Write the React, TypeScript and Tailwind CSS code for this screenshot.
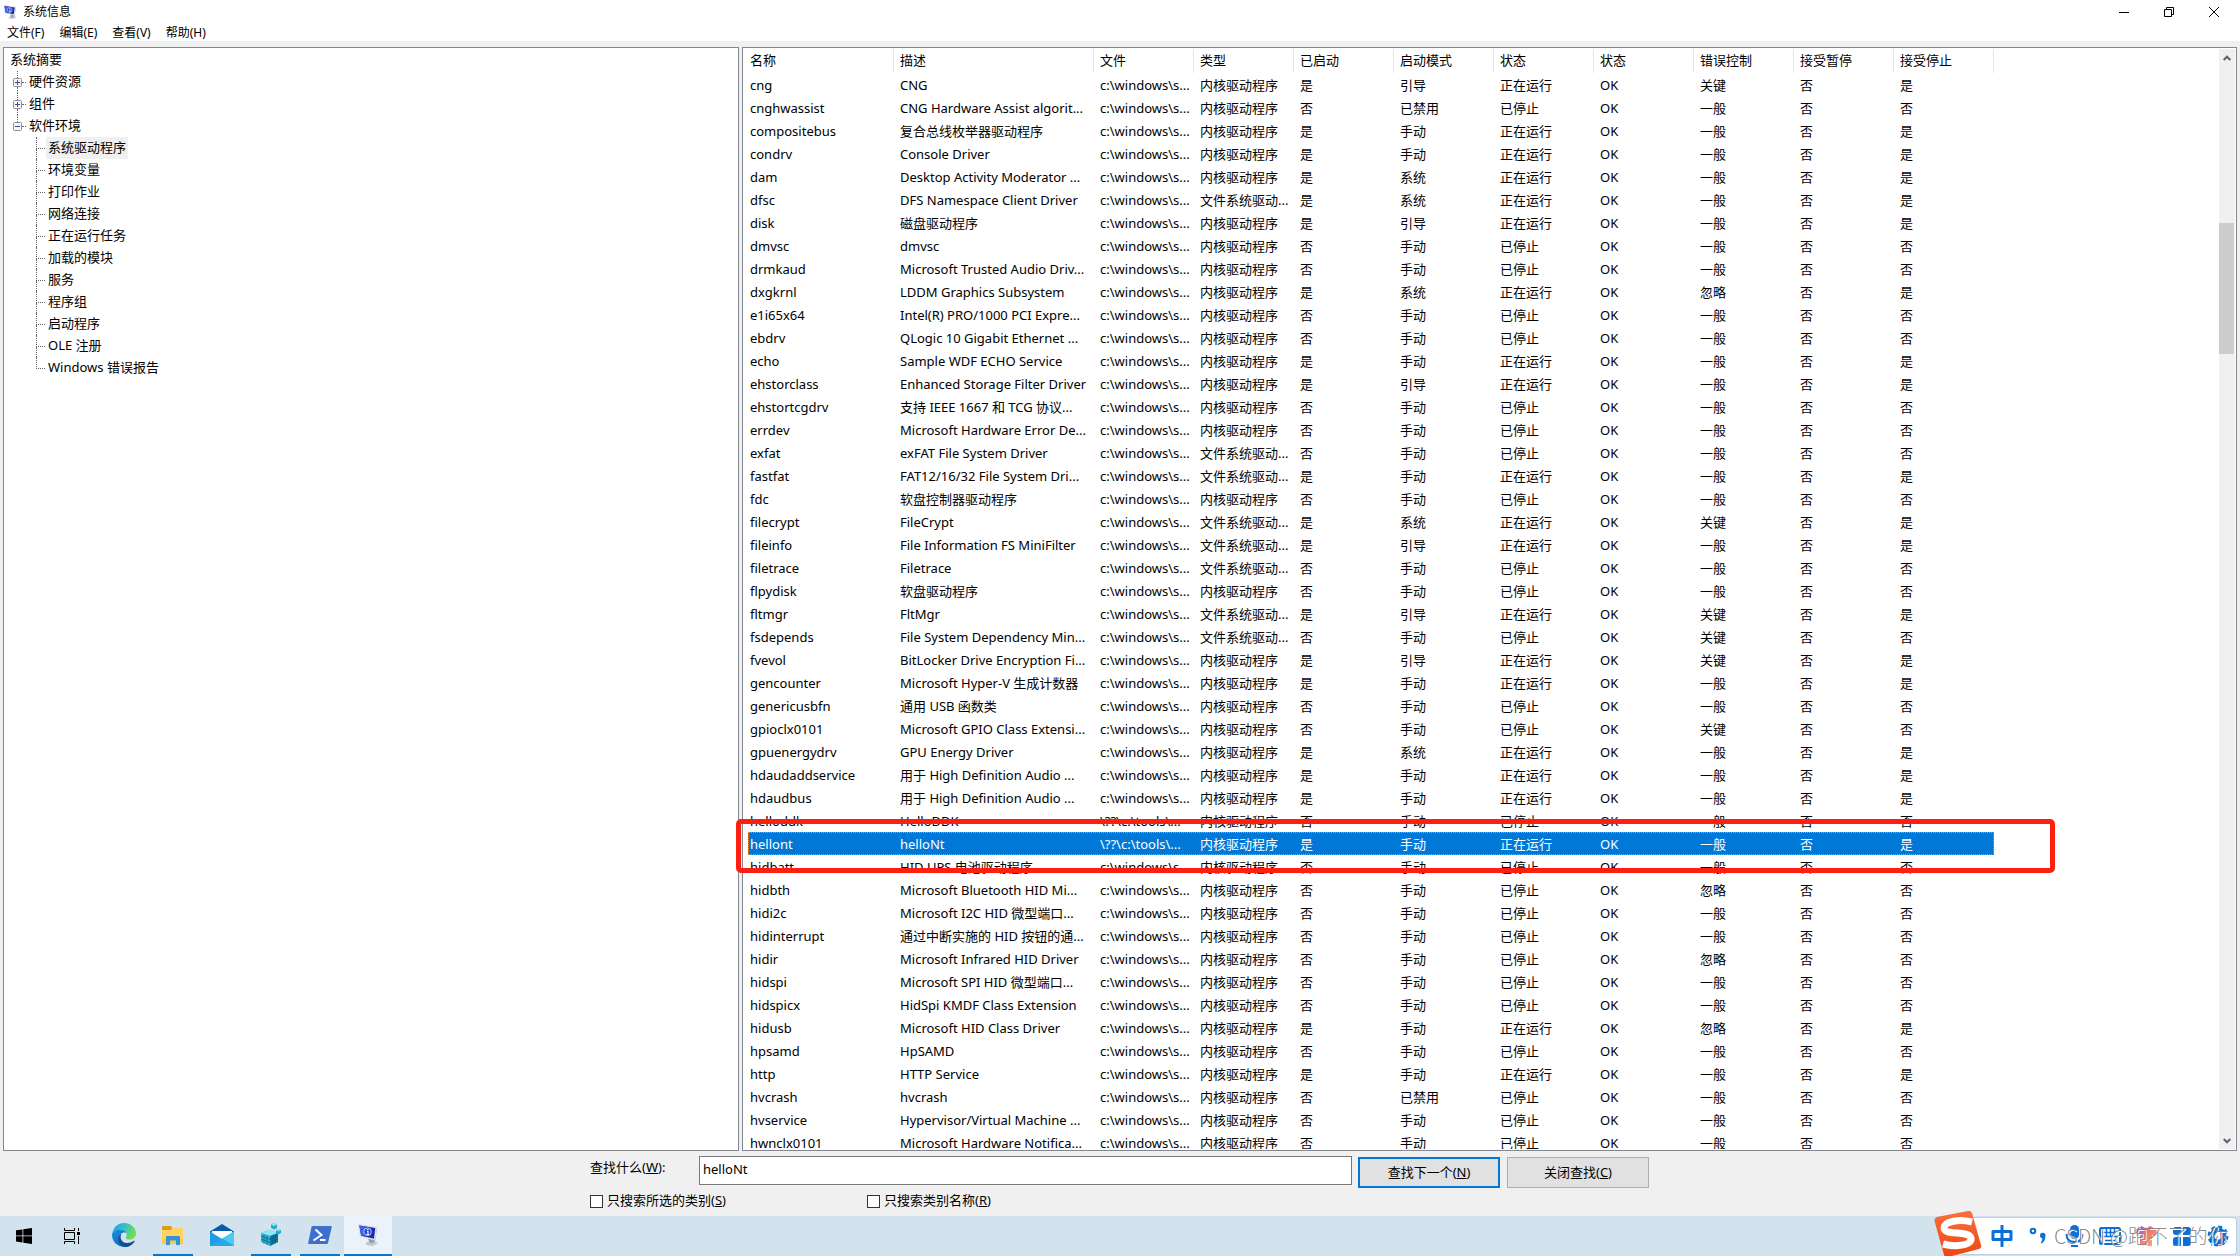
import React, { useState } from 'react';

const columns = ['名称', '描述', '文件', '类型', '已启动', '启动模式', '状态', '状态', '错误控制', '接受暂停', '接受停止'];

// name | description | started | start mode | error control | type
const source = `cng|CNG|是|引导|关键
cnghwassist|CNG Hardware Assist algorit...|否|已禁用|一般
compositebus|复合总线枚举器驱动程序|是|手动|一般
condrv|Console Driver|是|手动|一般
dam|Desktop Activity Moderator ...|是|系统|一般
dfsc|DFS Namespace Client Driver|是|系统|一般|fs
disk|磁盘驱动程序|是|引导|一般
dmvsc|dmvsc|否|手动|一般
drmkaud|Microsoft Trusted Audio Driv...|否|手动|一般
dxgkrnl|LDDM Graphics Subsystem|是|系统|忽略
e1i65x64|Intel(R) PRO/1000 PCI Expre...|否|手动|一般
ebdrv|QLogic 10 Gigabit Ethernet ...|否|手动|一般
echo|Sample WDF ECHO Service|是|手动|一般
ehstorclass|Enhanced Storage Filter Driver|是|引导|一般
ehstortcgdrv|支持 IEEE 1667 和 TCG 协议...|否|手动|一般
errdev|Microsoft Hardware Error De...|否|手动|一般
exfat|exFAT File System Driver|否|手动|一般|fs
fastfat|FAT12/16/32 File System Dri...|是|手动|一般|fs
fdc|软盘控制器驱动程序|否|手动|一般
filecrypt|FileCrypt|是|系统|关键|fs
fileinfo|File Information FS MiniFilter|是|引导|一般|fs
filetrace|Filetrace|否|手动|一般|fs
flpydisk|软盘驱动程序|否|手动|一般
fltmgr|FltMgr|是|引导|关键|fs
fsdepends|File System Dependency Min...|否|手动|关键|fs
fvevol|BitLocker Drive Encryption Fi...|是|引导|关键
gencounter|Microsoft Hyper-V 生成计数器|是|手动|一般
genericusbfn|通用 USB 函数类|否|手动|一般
gpioclx0101|Microsoft GPIO Class Extensi...|否|手动|关键
gpuenergydrv|GPU Energy Driver|是|系统|一般
hdaudaddservice|用于 High Definition Audio ...|是|手动|一般
hdaudbus|用于 High Definition Audio ...|是|手动|一般
helloddk|HelloDDK|否|手动|一般
hellont|helloNt|是|手动|一般
hidbatt|HID UPS 电池驱动程序|否|手动|一般
hidbth|Microsoft Bluetooth HID Mi...|否|手动|忽略
hidi2c|Microsoft I2C HID 微型端口...|否|手动|一般
hidinterrupt|通过中断实施的 HID 按钮的通...|否|手动|一般
hidir|Microsoft Infrared HID Driver|否|手动|忽略
hidspi|Microsoft SPI HID 微型端口...|否|手动|一般
hidspicx|HidSpi KMDF Class Extension|否|手动|一般
hidusb|Microsoft HID Class Driver|是|手动|忽略
hpsamd|HpSAMD|否|手动|一般
http|HTTP Service|是|手动|一般
hvcrash|hvcrash|否|已禁用|一般
hvservice|Hypervisor/Virtual Machine ...|否|手动|一般
hwnclx0101|Microsoft Hardware Notifica...|否|手动|一般`;

const drivers = source.split('\n').map((line) => {
    const [name, desc, started, mode, error, type] = line.split('|');
    return [
        name,
        desc,
        name.startsWith('hello') ? '\\??\\c:\\tools\\...' : 'c:\\windows\\s...',
        type === 'fs' ? '文件系统驱动...' : '内核驱动程序',
        started,
        mode,
        started === '是' ? '正在运行' : '已停止',
        'OK',
        error,
        '否',
        started,
    ];
});

const software = ['系统驱动程序', '环境变量', '打印作业', '网络连接', '正在运行任务', '加载的模块', '服务', '程序组', '启动程序', 'OLE 注册', 'Windows 错误报告'];

const InfoIcon = ({ className }: { className: string }) => (
    <svg viewBox="0 0 24 24" className={className}>
        <path d="M10 20l8-2 5 3-6 3-7-1z" fill="#c3c8d0" />
        <path d="M12 16l6-1 1 5-5 1z" fill="#989ea9" />
        <path d="M20 3l2 1-2 14-2 1z" fill="#9aa0aa" />
        <path d="M1 0l21 3-2 15L3 14z" fill="#dfe3ec" />
        <path d="M2.500 1.500l17.500 2.800L18.500 16 4.500 12.700z" fill="#1a2fb0" />
        <path d="M2.500 1.500l8 1.300L7 13.200l-2.500-.5z" fill="#3f63dc" />
        <circle cx="11.500" cy="8.500" r="4.200" fill="#2c49c8" stroke="#c4d2ff" strokeWidth="1" />
        <path d="M11 6h1.500M11 8h1v3.300M10.500 11.500h2.500" stroke="#fff" strokeWidth="1.200" fill="none" />
    </svg>
);

const WindowsIcon = () => (
    <svg viewBox="0 0 16 16" className="w-4 h-4">
        <path d="M0 2.300l6.500-.9v6.100H0zM7.300 1.300L16 0v7.500H7.300zM0 8.300h6.500v6.200L0 13.600zM7.300 8.300H16V16l-8.700-1.300z" fill="#000" />
    </svg>
);

const TaskViewIcon = () => (
    <svg viewBox="0 0 16 16" className="w-4 h-4" fill="none" stroke="#000">
        <path d="M.5 0v2.500h10V0M.5 16v-2.500h10V16M.5 4.500h10v7H.5zM14.500 0v3M14.500 8v8" />
        <path d="M13 4h3v3h-3z" fill="#000" stroke="none" />
    </svg>
);

const EdgeIcon = () => (
    <svg viewBox="0 0 24 24" className="w-6 h-6">
        <defs>
            <linearGradient id="edgeTop" x1="0" y1="0" x2="1" y2="0.400">
                <stop offset="0" stopColor="#1b9de2" />
                <stop offset="0.500" stopColor="#2fc0cf" />
                <stop offset="1" stopColor="#6fdc52" />
            </linearGradient>
            <linearGradient id="edgeSide" x1="0" y1="0" x2="0.600" y2="1">
                <stop offset="0" stopColor="#1a8fdc" />
                <stop offset="1" stopColor="#0f6cc0" />
            </linearGradient>
        </defs>
        <path d="M.3 10C1.500 4 6.300 0 12 0c7 0 12 5 12 10.500 0 3.500-2.800 6-6 6-3 0-4.300-1-4.300-1.800 0-.6 1-1 1-2.900C14.700 9 12 6.500 8 6.500 4.500 6.500 1.500 8 .3 10z" fill="url(#edgeTop)" />
        <path d="M0 12C0 8.500 4 6.500 8 6.500c3 0 5.500 1.500 6.400 3.500-3-1.500-6.600.5-6.600 4.500 0 4.500 3 8 7 9A12 12 0 0 1 0 12z" fill="url(#edgeSide)" />
        <path d="M9.500 11c-2.500 4 .5 9 5.500 9 3 0 5.500-1 7-2.200.5-.3.900.1.600.6-2.100 3.300-5.600 5.600-9.600 5.600C8.500 23.500 5.500 19 6.500 15c.5-2 1.500-3.400 3-4z" fill="#134c8f" />
    </svg>
);

const FolderIcon = () => (
    <svg viewBox="0 0 22 19" className="w-[22px] h-[19px]">
        <path d="M0 1q0-1 1-1h8l1.500 2v3H0z" fill="#e09b12" />
        <path d="M0 4h8.500l2-2H21v16H0z" fill="#ffd45e" />
        <path d="M0 13h21v5H0z" fill="#fcc84b" />
        <path d="M4 19v-8q0-1 1-1h12q1 0 1 1v8h-4v-4.500H8V19z" fill="#3492d8" />
    </svg>
);

const MailIcon = () => (
    <svg viewBox="0 0 24 22" className="w-6 h-[22px]">
        <path d="M0 7.500L12 0l12 7.500V12H0z" fill="#0c59a4" />
        <path d="M2 7h20v7H2z" fill="#fff" />
        <path d="M0 7.500L12 15 24 7.500V22H0z" fill="#1f9ee3" />
        <path d="M24 7.500V22L12 14.500z" fill="#4cc9f4" />
        <path d="M0 22l12-7.500L24 22z" fill="#28a8ea" />
    </svg>
);

const RegistryIcon = () => (
    <svg viewBox="0 0 22 24" className="w-[22px] h-6">
        <path d="M1 10l8-3 9 3v9l-8 4-9-4z" fill="#2bb0d6" />
        <path d="M1 10l8-3 9 3-8 3z" fill="#8be8f8" />
        <path d="M10 13l8-3v9l-8 4z" fill="#14799f" />
        <path d="M4 11v9.500M7 12v10M1 13l9 3.500 8-3.500M1 16l9 3.500 8-3.500M13 12v9M15.500 11v9" stroke="#0b5474" strokeWidth="0.600" fill="none" />
        <path d="M11 1.500L14 0l3 1.500V5l-3 1.500L11 5zM16 7l2.500-1L21 7v3l-2.500 1.500L16 10z" fill="#25abd0" />
        <path d="M11 1.500L14 0l3 1.500L14 3zM16 7l2.500-1L21 7l-2.500 1.200z" fill="#8ae8f8" />
    </svg>
);

const PowerShellIcon = () => (
    <svg viewBox="0 0 24 18" className="w-6 h-[18px]">
        <path d="M4.500 0H23q1 0 .8 1L20 17q-.3 1-1.200 1H1Q0 18 .2 17L3.500 1q.2-1 1-1z" fill="#3f6fce" />
        <path d="M7.500 3.500l6 5.500-8 5.500M12 14h5.500" stroke="#fff" strokeWidth="2" fill="none" />
    </svg>
);

const launchers = [
    { label: '开始', icon: <WindowsIcon /> },
    { label: '任务视图', icon: <TaskViewIcon /> },
];

const tasks = [
    { label: 'Microsoft Edge', icon: <EdgeIcon />, open: false },
    { label: '文件资源管理器', icon: <FolderIcon />, open: true },
    { label: '邮件', icon: <MailIcon />, open: false },
    { label: '注册表编辑器', icon: <RegistryIcon />, open: true },
    { label: 'PowerShell', icon: <PowerShellIcon />, open: true },
];

const Expander = ({ open }: { open: boolean }) => (
    <svg viewBox="0 0 9 9" className="w-[9px] h-[9px] shrink-0">
        <rect x="0.500" y="0.500" width="8" height="8" rx="1" fill="#f6f6f6" stroke="#919191" />
        <path d={open ? 'M2 4.500h5' : 'M2 4.500h5M4.500 2v5'} stroke="#3b4f9a" />
    </svg>
);

const TreeBranch = ({ label, open }: { label: string; open: boolean }) => (
    <div className="flex items-center h-[22px] pl-[9px]">
        <div className="flex flex-col items-center h-full w-[9px] shrink-0">
            <span className="flex-1 border-l border-dotted border-[#666]" />
            <Expander open={open} />
            <span className={`flex-1 border-l border-dotted ${open ? 'border-transparent' : 'border-[#666]'}`} />
        </div>
        <span className="w-1 border-t border-dotted border-[#666]" />
        <span className="pl-[3px]">{label}</span>
    </div>
);

const TreeLeaf = ({ label, last, selected }: { label: string; last: boolean; selected: boolean }) => (
    <div className="flex h-[22px] pl-8">
        <div className="w-[9px] flex flex-col shrink-0">
            <span className="h-3 border-l border-b border-dotted border-[#666]" />
            <span className={`flex-1 border-l border-dotted ${last ? 'border-transparent' : 'border-[#666]'}`} />
        </div>
        <span className={`ml-px px-[2px] leading-5 ${selected ? 'bg-[#f0f0f0]' : ''}`}>{label}</span>
    </div>
);

const imeTools = [
    {
        label: '中文输入',
        icon: (
            <path d="M2 6.500h18v8H2zM11 1v20" fill="none" stroke="currentColor" strokeWidth="3" strokeLinejoin="round" strokeLinecap="round" />
        ),
    },
    {
        label: '标点',
        icon: (
            <>
                <circle cx="6" cy="6" r="2.300" fill="none" stroke="currentColor" strokeWidth="2" />
                <path d="M13 10.500a2.700 2.700 0 0 1 5.500 0c0 4-1.500 6.500-4 8l-.8-1c1-.9 1.600-2.200 1.600-4.200-1.300 0-2.300-1.200-2.300-2.800z" fill="currentColor" />
            </>
        ),
    },
    {
        label: '语音',
        icon: (
            <>
                <rect x="7" y="0" width="9" height="14" rx="4.500" fill="currentColor" />
                <path d="M3.500 9c0 5 3 8 8 8s8-3 8-8M8 21h7" fill="none" stroke="currentColor" strokeWidth="2" />
            </>
        ),
    },
    {
        label: '软键盘',
        icon: (
            <>
                <rect x="1" y="3" width="20" height="16" rx="1.500" fill="none" stroke="currentColor" strokeWidth="2" />
                <path d="M3 7.500h16M3 11.500h16M6 15.500h10M7.500 4v8M11.500 4v8M15.500 4v8" stroke="currentColor" strokeWidth="1.500" />
            </>
        ),
    },
    {
        label: '皮肤',
        icon: (
            <>
                <defs>
                    <linearGradient id="shirt" x1="0" y1="0" x2="1" y2="1">
                        <stop offset="0" stopColor="#7a55f2" />
                        <stop offset="0.500" stopColor="#f07a6c" />
                        <stop offset="1" stopColor="#ffb27a" />
                    </linearGradient>
                </defs>
                <path d="M7 1q4 4 8 0l7 4-2.500 6-2.500-1v11H5V10l-3 1-2-6z" fill="url(#shirt)" />
            </>
        ),
    },
    {
        label: '工具箱',
        icon: (
            <path d="M2 5q0-3 3-3h5v8H5q-3 0-3-3zM12 2h5q3 0 3 3v2q0 3-3 3h-5zM2 15q0-3 3-3h5v9H5q-3 0-3-3zM12 12h5q3 0 3 3v3q0 3-3 3h-5z" fill="currentColor" />
        ),
    },
    {
        label: '设置',
        icon: (
            <>
                <circle cx="11" cy="11" r="6" fill="none" stroke="currentColor" strokeWidth="5" />
                <circle cx="11" cy="11" r="9" fill="none" stroke="currentColor" strokeWidth="3" strokeDasharray="4 3.070" />
            </>
        ),
    },
];

const ImeBar = () => (
    <div className="relative mt-px flex items-center h-[38px] w-[277px] mr-[3px] pl-[23px] bg-white border border-[#bccbe6] rounded-sm text-[#0a6fd8]">
        <svg viewBox="0 0 48 46" className="absolute -left-[27px] -top-[7px] w-12 h-[46px]">
            <defs>
                <linearGradient id="sogou" x1="0" y1="0" x2="0" y2="1">
                    <stop offset="0" stopColor="#f9703d" />
                    <stop offset="1" stopColor="#ee4511" />
                </linearGradient>
            </defs>
            <path d="M3 6L34 0q3-.4 4 2l9 32q.7 3-2 4L14 46q-3 .6-4-2L.500 10Q0 7 3 6z" fill="url(#sogou)" />
            <path d="M38 11C26 8 10 10 10 17c0 8 25 2 27 10 1 8-17 9-28 6" fill="none" stroke="#fff" strokeWidth="7" />
        </svg>
        {imeTools.map((tool) => (
            <button key={tool.label} aria-label={tool.label} className="w-9 flex justify-center">
                <svg viewBox="0 0 22 22" className="w-[22px] h-[22px]">{tool.icon}</svg>
            </button>
        ))}
        <span className="absolute left-[93px] top-1 text-xl leading-7 font-light whitespace-nowrap pointer-events-none text-[#808080]/90 [text-shadow:1px_1px_0_#fff] font-['Noto_Sans_CJK_SC',sans-serif]">
            CSDN @跑不了的你
        </span>
    </div>
);

const App: React.FC = () => {
    const [query, setQuery] = useState('helloNt');
    const [selected, setSelected] = useState('hellont');

    return (
        <div className="h-screen flex flex-col overflow-hidden bg-[#f0f0f0] text-black text-[13px] font-['Noto_Sans','Noto_Sans_CJK_SC',sans-serif]">
            <header className="bg-white h-[41px] shrink-0 text-xs">
                <div className="flex items-center h-6 pl-[3px]">
                    <InfoIcon className="w-[14px] h-[14px]" />
                    <h1 className="pl-1.5 flex-1">系统信息</h1>
                    <div className="flex pr-1">
                        <button aria-label="最小化" className="w-[45px] h-5 flex items-center justify-center">
                            <svg viewBox="0 0 10 10" className="w-[10px] h-[10px]"><path d="M0 5.500h10" stroke="#000" /></svg>
                        </button>
                        <button aria-label="还原" className="w-[45px] h-5 flex items-center justify-center">
                            <svg viewBox="0 0 10 10" className="w-[10px] h-[10px]" fill="none" stroke="#000"><path d="M.5 2.500h7v7h-7zM2.500 2V.5h7v7H8" /></svg>
                        </button>
                        <button aria-label="关闭" className="w-[45px] h-5 flex items-center justify-center">
                            <svg viewBox="0 0 10 10" className="w-[10px] h-[10px]"><path d="M0 0l10 10M10 0L0 10" stroke="#000" /></svg>
                        </button>
                    </div>
                </div>
                <nav className="flex gap-px h-[17px]">
                    {['文件(F)', '编辑(E)', '查看(V)', '帮助(H)'].map((item) => (
                        <button key={item} className="px-[7px] leading-[17px]">{item}</button>
                    ))}
                </nav>
            </header>

            <main className="relative flex-1 min-h-0 flex gap-[3px] px-[3px] pt-1.5">
                <section className="w-[736px] shrink-0 border border-[#828790] bg-white pt-px">
                    <div className="h-[22px] pl-1.5 leading-5">系统摘要</div>
                    <TreeBranch label="硬件资源" open={false} />
                    <TreeBranch label="组件" open={false} />
                    <TreeBranch label="软件环境" open />
                    {software.map((label, i) => (
                        <TreeLeaf key={label} label={label} selected={i === 0} last={i === software.length - 1} />
                    ))}
                </section>

                <section className="flex-1 min-w-0 flex border border-[#828790] bg-white p-px">
                    <div className="flex-1 min-w-0 overflow-hidden pl-1">
                        <table className="table-fixed w-[1246px] border-separate border-spacing-0">
                            <colgroup>
                                <col className="w-[146px]" />
                                <col className="w-[200px]" />
                                {columns.slice(2).map((_, i) => <col key={i} className="w-[100px]" />)}
                            </colgroup>
                            <thead>
                                <tr className="h-6">
                                    {columns.map((c, i) => (
                                        <th key={i} className={`p-0 pb-[2px] text-left font-normal leading-[22px] border-r border-[#e5e5e5] ${i === 0 ? 'pl-[2px]' : 'pl-1.5'}`}>{c}</th>
                                    ))}
                                </tr>
                            </thead>
                            <tbody>
                                {drivers.map((row) => (
                                    <tr
                                        key={row[0]}
                                        onClick={() => setSelected(row[0])}
                                        className={row[0] === selected ? 'h-[23px] bg-[#0078d7] text-white outline-1 outline-dotted -outline-offset-1 outline-[#ff8728]' : 'h-[23px]'}
                                    >
                                        {row.map((cell, i) => (
                                            <td key={i} className={`p-0 pt-[2px] whitespace-nowrap overflow-hidden leading-[21px] ${i === 0 ? 'pl-[2px]' : 'pl-1.5'}`}>{cell}</td>
                                        ))}
                                    </tr>
                                ))}
                            </tbody>
                        </table>
                    </div>
                    <div className="w-4 shrink-0 flex flex-col bg-[#f0f0f0]">
                        <button aria-label="向上滚动" className="h-[17px] flex items-center justify-center">
                            <svg viewBox="0 0 8 6" className="w-2 h-1.5"><path d="M.7 5L4 1.700 7.300 5" stroke="#606060" strokeWidth="2" fill="none" /></svg>
                        </button>
                        <div className="flex-1 min-h-0">
                            <div className="mt-[157px] mr-px h-[131px] bg-[#cdcdcd]" />
                        </div>
                        <button aria-label="向下滚动" className="h-[17px] flex items-center justify-center">
                            <svg viewBox="0 0 8 6" className="w-2 h-1.5"><path d="M.7 1L4 4.300 7.300 1" stroke="#606060" strokeWidth="2" fill="none" /></svg>
                        </button>
                    </div>
                </section>

                {/* marker drawn around the hellont row */}
                <div className="absolute left-[736px] top-[778px] w-[1319px] h-[54px] border-[5px] border-[#ff1f10] rounded-[5px] pointer-events-none" />
            </main>

            <footer className="h-[65px] shrink-0 flex justify-center">
                <div className="w-[1060px]">
                    <div className="flex items-start pt-[5px] h-[43px]">
                        <label htmlFor="query" className="w-[109px] pt-[2px]">查找什么(<u>W</u>):</label>
                        <input
                            id="query"
                            value={query}
                            onChange={(e) => setQuery(e.target.value)}
                            className="w-[653px] h-[29px] pl-[3px] pb-1 bg-white border border-[#7a7a7a] outline-none"
                        />
                        <button className="mt-px ml-1.5 w-[142px] h-[31px] bg-[#e1e1e1] border-2 border-[#0078d7]">查找下一个(<u>N</u>)</button>
                        <button className="mt-px ml-[7px] w-[142px] h-[31px] bg-[#e1e1e1] border border-[#adadad]">关闭查找(<u>C</u>)</button>
                    </div>
                    <div className="flex h-[14px] items-center">
                        <label className="flex items-center gap-1 w-[277px]">
                            <input type="checkbox" className="appearance-none w-[13px] h-[13px] bg-white border border-[#333]" />
                            <span>只搜索所选的类别(<u>S</u>)</span>
                        </label>
                        <label className="flex items-center gap-1">
                            <input type="checkbox" className="appearance-none w-[13px] h-[13px] bg-white border border-[#333]" />
                            <span>只搜索类别名称(<u>R</u>)</span>
                        </label>
                    </div>
                </div>
            </footer>

            <div className="h-10 shrink-0 flex items-stretch bg-[#d3e3ee]">
                <div className="flex mr-[3px]">
                    {launchers.map((l) => (
                        <button key={l.label} aria-label={l.label} className="w-12 flex items-center justify-center">{l.icon}</button>
                    ))}
                </div>
                {tasks.map((t) => (
                    <button key={t.label} aria-label={t.label} className="w-[49px] flex flex-col items-center">
                        <span className="flex-1 flex items-center">{t.icon}</span>
                        <span className={`w-10 h-[2px] ${t.open ? 'bg-[#0078d7]' : ''}`} />
                    </button>
                ))}
                <button aria-label="系统信息" className="w-12 flex flex-col items-center bg-[#ecf2fa]">
                    <span className="flex-1 flex items-center"><InfoIcon className="w-[22px] h-6" /></span>
                    <span className="w-full h-[2px] bg-[#0078d7]" />
                </button>
                <div className="flex-1" />
                <ImeBar />
            </div>
        </div>
    );
};

export default App;
